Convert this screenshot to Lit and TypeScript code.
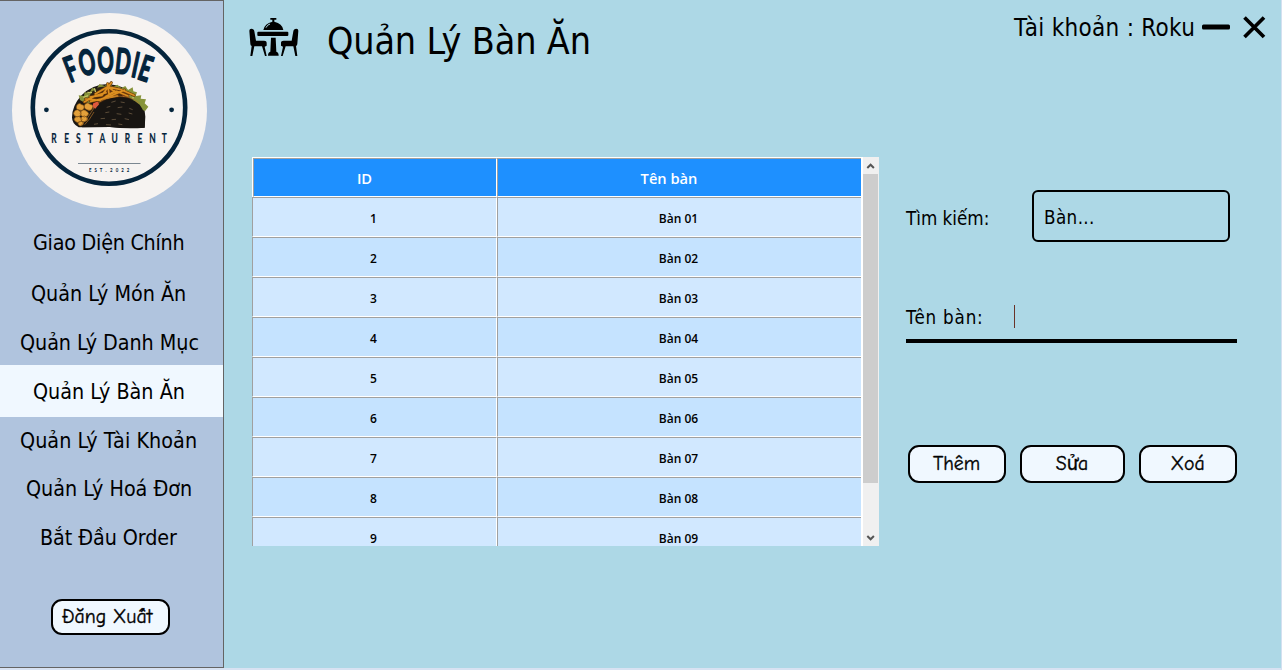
import { LitElement, html, css, svg } from "lit";
import { customElement, state } from "lit/decorators.js";
import { classMap } from "lit/directives/class-map.js";

@customElement("foodie-logo")
class FoodieLogo extends LitElement {
  static styles = css`
    :host { display: block; width: 195px; height: 195px; }
    svg { display: block; overflow: visible; }
    .word { font-family: Lato, sans-serif; font-weight: 700; fill: #04243c; stroke: #04243c; text-anchor: middle; stroke-linejoin: round; }
    .big { font-size: 35px; stroke-width: 1.6px; }
    .mid { font-size: 13.6px; stroke-width: 0.2px; }
    .tiny { font-size: 6.2px; stroke-width: 0; }
  `;

  private arc = [
    { c: "F", x: 71, y: 69.5, r: -21 },
    { c: "O", x: 87, y: 63, r: -11 },
    { c: "O", x: 105.5, y: 60.6, r: -3 },
    { c: "D", x: 123.2, y: 61.8, r: 6 },
    { c: "I", x: 135.8, y: 65.4, r: 12 },
    { c: "E", x: 145.6, y: 69, r: 18 },
  ];
  private place = [54, 66.6, 78.4, 90.2, 102.4, 114.7, 127.4, 140, 152.4, 164.4];
  private est = [90.3, 95.8, 101, 106, 111.2, 117, 122.4, 128];

  render() {
    return html`<svg width="195" height="195" viewBox="12 13 195 195">
      <circle cx="109.5" cy="110.5" r="97.5" fill="#f6f3f1" />
      <circle cx="109" cy="107.5" r="76.2" fill="none" stroke="#04243c" stroke-width="4.6" />
      <circle cx="46.4" cy="109.8" r="2.4" fill="#04243c" />
      <circle cx="171.6" cy="109.8" r="2.4" fill="#04243c" />
      ${this.arc.map((l) => svg`<text class="word big" transform="translate(${l.x} ${l.y}) rotate(${l.r}) scale(.58 1)" y="12">${l.c}</text>`)}
      ${[..."RESTAURENT"].map((c, i) => svg`<text class="word mid" transform="translate(${this.place[i]} 143.2) scale(.62 1)">${c}</text>`)}
      ${[..."EST.2022"].map((c, i) => svg`<text class="word tiny" transform="translate(${this.est[i]} 172.2) scale(.7 1)">${c}</text>`)}
      <path d="M78 163.5H140.5" stroke="#5c6b78" stroke-width=".8" />
      <g transform="scale(.33333)">
        <path d="M216 352Q216 318 243 287Q276 253 325 252Q382 258 411 291Q436 318 436 350L434 383Q380 386 330 381L236 382Q216 372 216 352Z" fill="#1b1713" />
        <path d="M240 300L236 286L252 288L254 276L268 280L276 264L290 268L298 252L314 258L326 250L340 260L352 254L364 264L376 258L384 270L398 262L400 274L411 277L407 288L424 286L422 296L438 298L434 310L445 320L436 332L424 330L418 318L404 314L388 296L350 280L300 284L272 310L250 306Z" fill="#87933a" />
        <path d="M264 300L274 276L296 262L330 258L352 268L300 290Z" fill="#2a2114" />
        <path d="M250 292l14-5m-2-10l14 1m7-13l4 12m68-15l3 12m12-5l2 12m16-5l2 12m12-4l-4 12" stroke="#c3c566" stroke-width="4" fill="none" />
        <path d="M264 300L292 274L318 270L370 282L402 300L342 292L296 322Z" fill="#35200e" />
        <path d="M362 276l13-6l7 15l-12 5zM316 266l12-4l4 12l-12 4zM280 310l14-6l4 13l-12 9l-10-6z" fill="#e4553f" />
        <path d="M253 306L284 288L318 278M257 297L300 301L344 273M270 291L306 286L334 248M286 282L323 260L349 279M294 300L330 289L374 270M318 289L350 274L384 288M329 262L360 268L402 286M272 304L311 296L352 288M323 251L327 282" stroke="#6d3b0b" stroke-width="9" fill="none" stroke-linecap="round" stroke-linejoin="round" />
        <path d="M253 306L284 288L318 278M257 297L300 301L344 273M270 291L306 286L334 248M286 282L323 260L349 279M294 300L330 289L374 270M318 289L350 274L384 288M329 262L360 268L402 286M272 304L311 296L352 288M323 251L327 282" stroke="#dc8f20" stroke-width="5" fill="none" stroke-linecap="round" stroke-linejoin="round" />
        <g fill="#e3a03a" stroke="#805015" stroke-width="2">
          <path d="M231 315q7-9 14-1q10 1 7 11q-5 10-14 5q-13-2-7-15zM254 314q8-10 16-1q12 2 7 12q-5 10-14 5q-14-4-9-16zM224 333q8-8 15 0q9 5 2 14q-8 7-16 1q-8-7-1-15zM243 334q9-9 17 0q10 5 3 13q-10 8-18 1q-8-7-2-14zM226 352q9-7 16 1q8 6 0 12q-9 6-16-1q-7-6 0-12zM246 350q9-6 15 3q5 8-4 11q-10 4-14-4q-2-6 3-10zM235 366q9-6 15 2q2 7-8 9q-10 0-7-11z" />
        </g>
        <path d="M246 382Q266 365 279 340Q296 300 337 294Q389 284 419 314Q439 337 434 383Q380 387 330 381Z" fill="#181512" />
        <path d="M240 378Q260 363 273 338Q292 299 334 291Q388 281 418 310M254 374Q270 358 282 336" stroke="#b47428" stroke-width="2" fill="none" />
        <path d="M334 307l13-4m15 3l12 2m-54 14l11-3m22 4l14-2m21 4l10 4m-82 9l12-2m22 5l14 2m22-4l11 3m-95 14l13-1m20 4l13-1m26-2l13 3m-105 14l12-2m24 3l15 1m22-3l12 2" stroke="#887052" stroke-width="1.8" />
      </g>
    </svg>`;
  }
}

@customElement("side-bar")
class SideBar extends LitElement {
  static styles = css`
    :host { box-sizing: border-box; width: 224px; height: 668px; display: flex; flex-direction: column; background: #b0c4de; border: 1px solid #646464; border-left: 0; padding-top: 12px; font-family: Tahoma, "DejaVu Sans Condensed", "DejaVu Sans", sans-serif; font-stretch: condensed; }
    foodie-logo { margin-left: 12px; }
    nav { display: flex; flex-direction: column; margin-top: 9px; }
    .item { height: 49px; display: flex; align-items: center; font-size: 21.33px; line-height: 26px; white-space: pre; box-sizing: border-box; }
    .tall { height: 51px; }
    .short { height: 48px; }
    .active { background: #f0f8ff; height: 52px; }
    .n0 { padding-left: 33px; letter-spacing: -0.25px; }
    .n1 { padding: 2px 0 0 31px; }
    .n2 { padding: 4px 0 0 20px; letter-spacing: -0.05px; }
    .n3 { padding: 2px 0 0 33px; }
    .n4 { padding-left: 20px; letter-spacing: 0.05px; }
    .n5 { padding: 0 0 2px 26px; }
    .n6 { padding: 0 0 2px 40px; letter-spacing: -0.08px; }
    .logout { box-sizing: border-box; width: 119px; height: 36px; margin: 36px 0 0 50.5px; border: 2px solid #000; border-radius: 11px; background: #f0f8ff; color: #000; font: 19.8px/31px "Comic Sans MS", "Comic Neue", "DejaVu Sans Condensed", "DejaVu Sans", sans-serif; font-stretch: condensed; -webkit-text-stroke: 0.35px #000; padding: 0 0 1px 9px; text-align: left; white-space: pre; }
  `;
  private items = ["Giao Diện Chính", "Quản Lý Món Ăn", "Quản Lý Danh Mục", "Quản Lý Bàn Ăn", "Quản Lý Tài Khoản", "Quản Lý Hoá Đơn", "Bắt Đầu Order"];
  @state() private active = 3;
  render() {
    return html`<foodie-logo></foodie-logo>
      <nav>${this.items.map((t, i) => html`<a class=${classMap({ item: true, [`n${i}`]: true, tall: i === 0, short: i === 2 || i === 4, active: i === this.active })} @click=${() => (this.active = i)}>${t}</a>`)}</nav>
      <button class="logout">Đăng Xuất</button>`;
  }
}

@customElement("table-grid")
class TableGrid extends LitElement {
  static styles = css`
    :host { display: flex; width: 627px; height: 389px; overflow: hidden; background: #fff; font-family: "Segoe UI", "Open Sans", sans-serif; font-stretch: normal; }
    .grid { width: 609px; }
    .row { box-sizing: border-box; display: grid; grid-template-columns: 245px 364px; height: 40px; }
    .cell { box-sizing: border-box; border-left: 1px solid #a0a0a0; border-top: 1px solid #a0a0a0; border-bottom: 1px solid #fff; display: flex; align-items: center; justify-content: center; font-size: 12px; font-weight: 600; color: #000; background: #d1e8ff; padding: 2px 2px 0 0; }
    .cell:first-child { border-right: 1px solid #fff; }
    .alt .cell { background: #c5e3ff; }
    .head { border-top: 1px solid #fff; }
    .head .cell { height: 39px; background: #1e90ff; color: #fff; font-size: 14.67px; padding: 0 21px 0 0; }
    .head .cell:first-child { box-shadow: -1px 0 #fff; margin-left: 1px; }
    .bar { width: 16px; margin-left: 2px; background: #f0f0f0; display: flex; flex-direction: column; }
    .arrow { display: block; width: 15px; height: 17px; }
    .thumb { width: 15px; height: 309px; background: #cdcdcd; }
    .down { margin-top: auto; }
  `;
  private rows = Array.from({ length: 9 }, (_, i) => i + 1);
  render() {
    return html`<div class="grid">
        <div class="row head"><div class="cell">ID</div><div class="cell">Tên bàn</div></div>
        ${this.rows.map((n) => html`<div class=${classMap({ row: true, alt: n % 2 === 0 })}><div class="cell">${n}</div><div class="cell">Bàn 0${n}</div></div>`)}
      </div>
      <div class="bar">
        <svg class="arrow"><path d="M4.3 11L7.6 7.7L10.9 11" fill="none" stroke="#555" stroke-width="2" /></svg>
        <div class="thumb"></div>
        <svg class="arrow down"><path d="M4.3 7L7.6 10.3L10.9 7" fill="none" stroke="#555" stroke-width="2" /></svg>
      </div>`;
  }
}

@customElement("app-root")
class AppRoot extends LitElement {
  static styles = css`
    :host { display: flex; box-sizing: border-box; width: 1282px; height: 670px; overflow: hidden; background: #add8e6; border-right: 1px solid #d3e0f0; border-bottom: 2px solid #d8e2f2; font-family: Tahoma, "DejaVu Sans Condensed", "DejaVu Sans", sans-serif; font-stretch: condensed; color: #000; }
    side-bar { flex: none; }
    main { flex: 1; min-width: 0; }
    header { display: flex; align-items: flex-start; height: 157px; }
    .emblem { width: 50px; height: 40px; margin: 17px 0 0 25px; }
    h1 { margin: 18px 0 0 28px; width: 300px; font-weight: 400; font-size: 37.33px; line-height: 46px; letter-spacing: -0.15px; white-space: pre; }
    .account { margin: 13px 0 0 387px; width: 188px; font-size: 24px; line-height: 30px; letter-spacing: 0.3px; white-space: pre; }
    .win { display: block; height: 24px; margin-top: 15px; }
    .min { width: 28px; }
    .close { width: 24px; margin-left: 12px; }
    .content { display: flex; padding-left: 28px; }
    .form { width: 331px; margin-left: 27px; }
    .search { display: flex; align-items: center; height: 52px; margin-top: 33px; }
    .label { font-size: 18.67px; line-height: 24px; width: 126px; padding-top: 5px; white-space: pre; }
    .box { box-sizing: border-box; width: 198px; height: 52px; border: 2px solid #000; border-radius: 6px; font-size: 18.67px; line-height: 51px; padding-left: 10px; letter-spacing: 0.4px; white-space: pre; }
    .name { display: flex; align-items: flex-start; box-sizing: border-box; height: 41px; margin-top: 60px; border-bottom: 4px solid #000; }
    .name .label { width: 108px; padding-top: 4px; letter-spacing: 0.8px; }
    .caret { width: 1px; height: 23px; margin-top: 3px; background: #6a3328; }
    .actions { display: flex; gap: 14px; margin: 101.5px 0 0 1.5px; }
    .actions button { flex: none; box-sizing: border-box; height: 38px; border: 2px solid #000; border-radius: 11px; background: #f0f8ff; color: #000; font: 19.8px/34px "Comic Sans MS", "Comic Neue", "DejaVu Sans Condensed", "DejaVu Sans", sans-serif; font-stretch: condensed; -webkit-text-stroke: 0.35px #000; padding: 0; width: 98px; white-space: pre; }
    .actions .edit { width: 105px; }
  `;
  render() {
    return html`<side-bar></side-bar>
      <main>
        <header>
          <svg class="emblem" viewBox="41 51 150 120">
            <path d="M105 54h18v5h-6v6q24 5 27 25H84Q88 70 111 65v-6h-6z" />
            <path d="M92 83q4-9 12-11" stroke="#add8e6" stroke-width="3" fill="none" />
            <rect x="66" y="95" width="93" height="13" rx="3" />
            <path d="M107 113h14l2 42q7 2 7 12H98q0-10 7-12z" />
            <path d="M42 92q0-6 6-6q8 0 9 8l5 28h24q8 0 8 7v8l-6 3l6 28h-5l-9-29H57l-6 29h-6l4-30q-4-1-4-7z" />
            <path transform="translate(231 0) scale(-1 1)" d="M42 92q0-6 6-6q8 0 9 8l5 28h24q8 0 8 7v8l-6 3l6 28h-5l-9-29H57l-6 29h-6l4-30q-4-1-4-7z" />
          </svg>
          <h1>Quản Lý Bàn Ăn</h1>
          <span class="account">Tài khoản : Roku</span>
          <svg class="win min"><rect x="0" y="9.5" width="28" height="5" rx="1.5" /></svg>
          <svg class="win close"><path d="M2.5 2.5L22 22M22 2.5L2.5 22" stroke="#000" stroke-width="3.7" /></svg>
        </header>
        <div class="content">
          <table-grid></table-grid>
          <div class="form">
            <div class="search"><span class="label">Tìm kiếm:</span><div class="box">Bàn...</div></div>
            <div class="name"><span class="label">Tên bàn:</span><span class="caret"></span></div>
            <div class="actions"><button>Thêm</button><button class="edit">Sửa</button><button>Xoá</button></div>
          </div>
        </div>
      </main>`;
  }
}
